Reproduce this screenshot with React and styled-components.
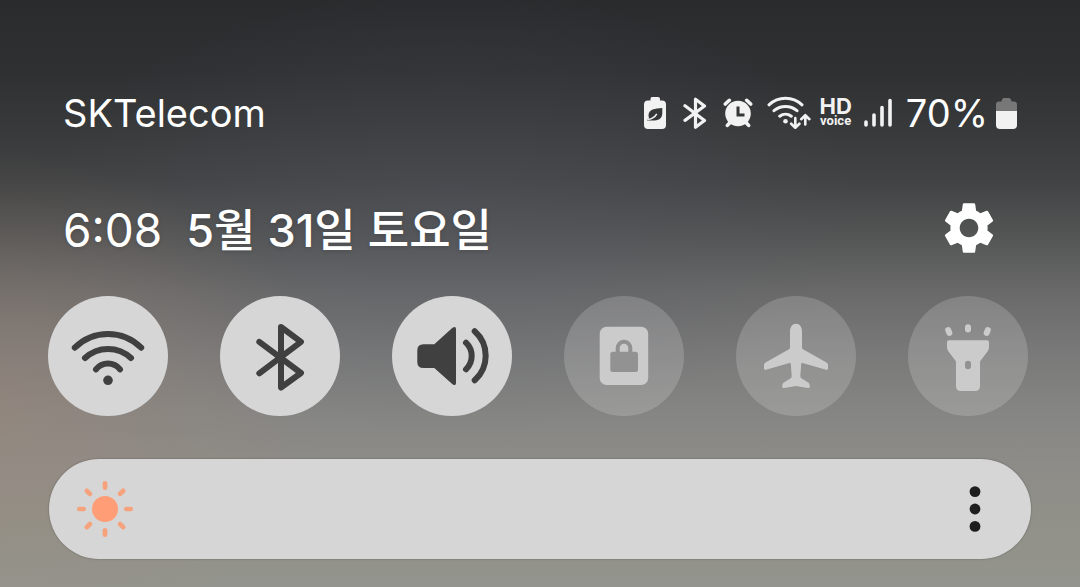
import React from "react";
import styled, { createGlobalStyle } from "styled-components";
import { MdSettings } from "react-icons/md";

const GlobalStyle = createGlobalStyle`
  *, *::before, *::after { box-sizing: border-box; }
  body { margin: 0; background: #929389; }
  button, input { font: inherit; color: inherit; margin: 0; }
`;

const Shade = styled.main`
  min-height: 100vh;
  padding: 89px 0 28px;
  color: #fff;
  font-family: Inter, "Noto Sans CJK KR", sans-serif;
  background:
    radial-gradient(ellipse 30% 42% at 0% 68%, rgba(164, 136, 118, 0.38), rgba(164, 136, 118, 0) 100%),
    radial-gradient(ellipse 38% 38% at 42% 36%, rgba(86, 91, 104, 0.32), rgba(86, 91, 104, 0) 100%),
    linear-gradient(180deg, #2a2b2d 0%, #2f3032 12%, #373839 21%, #424344 31%, #535454 40%,
      #6a6a6a 50%, #797979 60%, #858583 70%, #8d8c88 79%, #919189 90%, #93948d 100%);
`;

const StatusBar = styled.header`
  display: flex;
  align-items: center;
  justify-content: space-between;
  height: 48px;
  padding: 0 63px;
`;

const StatusText = styled.span`
  color: #fff;
  font-size: 38px;
  line-height: 48px;
  white-space: nowrap;
`;

const StatusIcons = styled.div`
  display: flex;
  align-items: center;
  color: #f2f2f2;
`;

const StatusItem = styled.div`
  display: flex;
  margin-left: ${(p) => p.$gap}px;
`;

const HdVoice = styled.div`
  display: flex;
  flex-direction: column;
  align-items: center;
  margin-left: 8px;
  font-weight: 700;
`;

const HdTop = styled.span`
  font-size: 22px;
  line-height: 16px;
`;

const HdBottom = styled.span`
  font-family: Roboto, sans-serif;
  font-size: 13px;
  line-height: 14px;
`;

const DateBar = styled.section`
  display: flex;
  align-items: center;
  justify-content: space-between;
  height: 64px;
  margin-top: 59px;
  padding: 0 80px 0 63px;
`;

const DateGroup = styled.div`
  display: flex;
  align-items: baseline;
  gap: 24px;
  padding-top: 4px;
  text-shadow: 0 1px 4px rgba(0, 0, 0, 0.15);
  white-space: nowrap;
`;

const Clock = styled.time`
  font-size: 46px;
  line-height: 60px;
`;

const Day = styled.time`
  font-size: 45px;
  font-weight: 500;
  line-height: 60px;
`;

const PlainButton = styled.button`
  display: flex;
  align-items: center;
  justify-content: center;
  padding: 0;
  border: 0;
  background: none;
  cursor: pointer;
`;

const Tiles = styled.section`
  display: flex;
  justify-content: space-between;
  margin-top: 36px;
  padding: 0 52px 0 48px;
`;

const Tile = styled(PlainButton)`
  width: 120px;
  height: 120px;
  border-radius: 50%;
  background: ${(p) => (p.$on ? "#d6d6d6" : "rgba(255, 255, 255, 0.17)")};
  color: ${(p) => (p.$on ? "#404040" : "#cbcbcb")};
`;

const Brightness = styled.section`
  display: flex;
  align-items: center;
  height: 100px;
  margin: 43px 49px 0;
  padding: 0 36px 0 26px;
  border-radius: 50px;
  background: #d6d6d6;
  box-shadow: 0 0 2px rgba(0, 0, 0, 0.35);
`;

const Range = styled.input`
  flex: 1;
  min-width: 0;
  height: 100px;
  appearance: none;
  background: transparent;
  &::-webkit-slider-runnable-track { background: transparent; height: 100px; }
  &::-webkit-slider-thumb { appearance: none; width: 1px; height: 100px; background: transparent; }
`;

const MoreButton = styled(PlainButton)`
  width: 40px;
  height: 60px;
  color: #1e1e1e;
`;

const BatterySaverIcon = () => (
  <svg width="22" height="32" viewBox="0 0 22 32" aria-hidden="true">
    <path d="M8 0h6q2 0 2 2v1.500h2q4 0 4 4V28q0 4-4 4H4q-4 0-4-4V7.500q0-4 4-4h2.500V2q0-2 1.500-2z" fill="currentColor" />
    <path d="M18.300 11C11 11.300 4.500 12.500 4.500 18.500q0 1.300.6 2.500L3 23.400h7.500c5.500 0 7.800-3.200 7.800-7.400z" fill="#353637" />
    <path d="M4 22.500 Q10 21.500 12.800 16.800" fill="none" stroke="currentColor" strokeWidth="1.600" />
  </svg>
);

const BluetoothSmallIcon = () => (
  <svg width="25" height="32" viewBox="0 0 25 32" fill="none" stroke="currentColor" strokeWidth="3.200" strokeLinecap="round" strokeLinejoin="round" aria-hidden="true">
    <path d="M3 8.800 22.500 23.500 13.500 30.200V2.200L22.500 9 3 23.400" />
  </svg>
);

const AlarmIcon = () => (
  <svg width="30" height="30" viewBox="0 0 30 30" aria-hidden="true">
    <circle cx="15" cy="15.500" r="12.800" fill="currentColor" />
    <g stroke="currentColor" strokeLinecap="round" strokeWidth="3.600">
      <path d="M2.300 6 6.300 2.300M27.700 6 23.700 2.300M7 24.500 4.400 27.400M23 24.500l2.600 2.900" />
    </g>
    <path d="M15 8.500v8.500h6.500" fill="none" stroke="#353637" strokeWidth="3" />
  </svg>
);

const WifiSmallIcon = () => (
  <svg width="44" height="34" viewBox="0 0 44 34" fill="none" stroke="currentColor" strokeWidth="3" strokeLinecap="round" strokeLinejoin="round" aria-hidden="true">
    <path d="M2 8.800A24 24 0 0 1 35 8.800M7 14.700A18 18 0 0 1 30 14.700M12.700 20.200A9.500 9.500 0 0 1 24.300 20.200" />
    <circle cx="18.500" cy="25.300" r="2.300" fill="currentColor" stroke="none" />
    <path d="M28.300 22v9.500M24.200 27.700l4.100 4 4.100-4M38.300 28.500V19.500M34.200 23.200l4.100-4 4.100 4" strokeWidth="2.600" />
  </svg>
);

const SignalIcon = () => (
  <svg width="28" height="30" viewBox="0 0 28 30" stroke="currentColor" strokeWidth="3.600" strokeLinecap="round" aria-hidden="true">
    <path d="M2 24v3M10 17v10M18 9.500V27M26 2.500V27" />
  </svg>
);

const BatteryIcon = () => (
  <svg width="21" height="31" viewBox="0 0 21 31" aria-hidden="true">
    <path d="M8 0h5q2 0 2.500 3.500H18q3 0 3 3V13H0V6.500q0-3 3-3h2.500Q6 0 8 0z" fill="#777" />
    <path d="M0 13h21v14q0 4-4 4H4q-4 0-4-4z" fill="currentColor" />
  </svg>
);

const TileSvg = ({ children }) => (
  <svg width="120" height="120" viewBox="0 0 120 120" aria-hidden="true">{children}</svg>
);

const strokes = { fill: "none", stroke: "currentColor", strokeWidth: 6, strokeLinecap: "round", strokeLinejoin: "round" };

const WifiIcon = () => (
  <TileSvg>
    <path {...strokes} d="M26.800 51.700A47 47 0 0 1 93.200 51.700M37 62A33.600 33.600 0 0 1 83 62M48 73.300A15.400 15.400 0 0 1 72 73.300" />
    <circle cx="60" cy="84.300" r="4.800" fill="currentColor" />
  </TileSvg>
);

const BluetoothIcon = () => (
  <TileSvg>
    <path {...strokes} d="M39.300 45.800 81 77 61 91.500V31L81 45.800 39.300 77.300" />
  </TileSvg>
);

const SoundIcon = () => (
  <TileSvg>
    <path d="M31.500 48.300H42.300L60.500 31.800Q64 29.500 64 33V87Q64 90.500 60.500 88.200L42.300 72H31.500Q25.300 72 25.300 66V54.300Q25.300 48.300 31.500 48.300Z" fill="currentColor" />
    <path {...strokes} d="M74 46.700A18.400 18.400 0 0 1 74 73.300M82.700 35.300A32.800 32.800 0 0 1 82.700 84.300" />
  </TileSvg>
);

const LockIcon = () => (
  <TileSvg>
    <rect x="35.700" y="30.700" width="48.500" height="58.300" rx="7" fill="currentColor" />
    <rect x="46.300" y="55.700" width="27.700" height="20.300" rx="2.500" fill="#929292" />
    <path d="M53.700 57V52a6.300 6.300 0 0 1 12.600 0v5" fill="none" stroke="#929292" strokeWidth="4" />
  </TileSvg>
);

const PlaneIcon = () => (
  <TileSvg>
    <path d="M60 27.700c3.800 0 6 3.500 6 8V51.500q0 1.200 1 1.800L90.500 66.500Q92 67.500 92 69V72.500Q92 74.200 90 73.800L66.500 67Q65.300 66.700 65.200 68L64.300 80.300Q64.300 81.500 65.300 82.200L72.500 86.800Q74 88 73.800 90.500 73.700 92.300 72 92L60 90 48 92Q46.300 92.300 46.200 90.500 46 88 47.500 86.800L54.700 82.200Q55.700 81.500 55.700 80.300L54.800 68Q54.700 66.700 53.500 67L30 73.800Q28 74.200 28 72.500V69Q28 67.500 29.500 66.500L53 53.300Q54 52.700 54 51.500V35.700c0-4.500 2.200-8 6-8z" fill="currentColor" />
  </TileSvg>
);

const TorchIcon = () => (
  <TileSvg>
    <path fillRule="evenodd" d="M41 44.300H79q2 0 2 2V51q0 2.500-1.300 4.300L72 65.500V90q0 5-5 5H53q-5 0-5-5V65.500L40.300 55.300Q39 53.500 39 51V46.300q0-2 2-2zM60 64.700q-3 0-3 3.300v2q0 3.300 3 3.300t3-3.300v-2q0-3.300-3-3.300z" fill="currentColor" />
    <g fill="currentColor">
      <rect x="57" y="28.200" width="6" height="8.200" rx="3" />
      <rect x="37.700" y="31" width="6" height="9" rx="3" transform="rotate(-22 40.700 35.300)" />
      <rect x="76.300" y="31" width="6" height="9" rx="3" transform="rotate(22 79.300 35.300)" />
    </g>
  </TileSvg>
);

const SunIcon = () => (
  <svg width="60" height="60" viewBox="-30 -30 60 60" aria-hidden="true">
    <circle r="13" fill="#ff9e76" />
    <g stroke="#f5a27d" strokeWidth="4.700" strokeLinecap="round">
      {[0, 45, 90, 135, 180, 225, 270, 315].map((a) => (
        <path key={a} d="M0 -21.300V-25.700" transform={`rotate(${a})`} />
      ))}
    </g>
  </svg>
);

const MoreIcon = () => (
  <svg width="12" height="48" viewBox="0 0 12 48" fill="currentColor" aria-hidden="true">
    <circle cx="6" cy="6.600" r="5.400" />
    <circle cx="6" cy="24" r="5.400" />
    <circle cx="6" cy="41.400" r="5.400" />
  </svg>
);

const tiles = [
  { label: "Wi-Fi", on: true, Icon: WifiIcon },
  { label: "블루투스", on: true, Icon: BluetoothIcon },
  { label: "소리", on: true, Icon: SoundIcon },
  { label: "자동 회전", on: false, Icon: LockIcon },
  { label: "비행기 탑승 모드", on: false, Icon: PlaneIcon },
  { label: "손전등", on: false, Icon: TorchIcon },
];

export default function App() {
  return (
    <>
      <GlobalStyle />
      <Shade>
        <StatusBar>
          <StatusText>SKTelecom</StatusText>
          <StatusIcons>
            <StatusItem $gap={0}><BatterySaverIcon /></StatusItem>
            <StatusItem $gap={16}><BluetoothSmallIcon /></StatusItem>
            <StatusItem $gap={16}><AlarmIcon /></StatusItem>
            <StatusItem $gap={14}><WifiSmallIcon /></StatusItem>
            <HdVoice>
              <HdTop>HD</HdTop>
              <HdBottom>voice</HdBottom>
            </HdVoice>
            <StatusItem $gap={12}><SignalIcon /></StatusItem>
            <StatusItem $gap={14}><StatusText>70%</StatusText></StatusItem>
            <StatusItem $gap={8}><BatteryIcon /></StatusItem>
          </StatusIcons>
        </StatusBar>
        <DateBar>
          <DateGroup>
            <Clock>6:08</Clock>
            <Day>5월 31일 토요일</Day>
          </DateGroup>
          <PlainButton type="button" aria-label="설정">
            <MdSettings size={62} />
          </PlainButton>
        </DateBar>
        <Tiles>
          {tiles.map(({ label, on, Icon }) => (
            <Tile key={label} type="button" aria-label={label} aria-pressed={on} $on={on}>
              <Icon />
            </Tile>
          ))}
        </Tiles>
        <Brightness>
          <SunIcon />
          <Range type="range" min="0" max="100" defaultValue="100" aria-label="밝기" />
          <MoreButton type="button" aria-label="더보기">
            <MoreIcon />
          </MoreButton>
        </Brightness>
      </Shade>
    </>
  );
}
